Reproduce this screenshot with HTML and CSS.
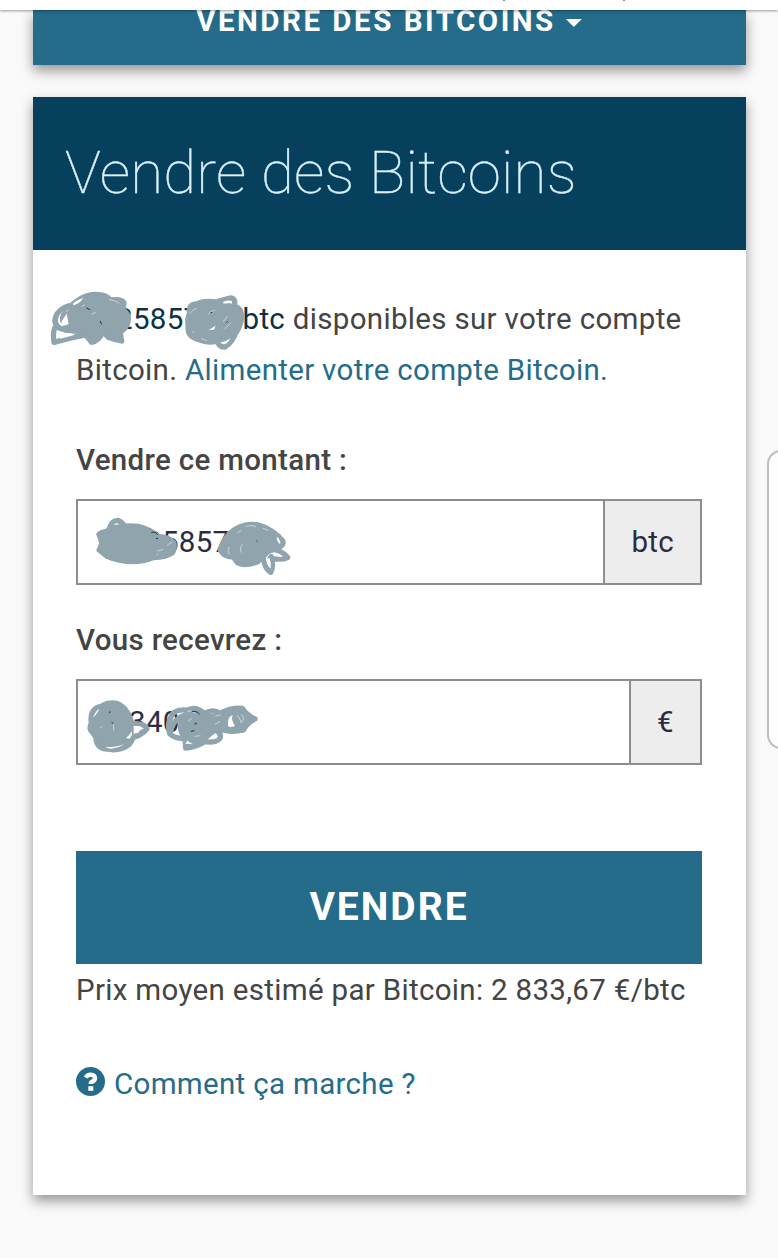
FILE: index.html
```
<!DOCTYPE html>
<html lang="fr">
<head>
    <meta charset="UTF-8">
    <meta name="viewport" content="width=device-width, initial-scale=1.0">
    <title>Vendre des Bitcoins</title>
    <link rel="stylesheet" href="styles.css">
</head>
<body>
    <header class="topbar">
        <span class="speck"></span>
        <span class="speck"></span>
    </header>

    <main class="container">
        <div class="menu-button"><span class="menu-label">VENDRE DES BITCOINS</span><span class="caret"></span></div>

        <section class="card">
            <h1>Vendre des Bitcoins</h1>
            <form class="card-body">
                <p class="balance">
                    <span class="amount"><span class="gap-start"></span>25857<span class="gap-mid"></span>btc</span> disponibles sur votre compte<br>
                    Bitcoin. <a class="fund">Alimenter votre compte Bitcoin.</a>
                    <svg class="scribble scribble-balance" viewBox="0 0 780 360">
                        <path class="blob" d="M75 95 Q100 55 150 45 Q195 40 215 62 Q246 62 248 85 Q266 95 264 120 Q262 145 243 158 L238 178 Q225 172 205 172 L190 160 L155 185 L135 162 L85 150 Q50 120 75 95Z"/>
                        <path d="M60 145 Q35 130 52 100 Q72 76 100 76 Q120 50 155 44 Q195 40 212 60 Q245 55 252 68 Q252 80 245 88 Q268 98 265 120 Q262 145 240 155 L245 183 Q225 178 205 172 L190 155 Q175 185 155 187 L138 165 Q100 170 42 187 Q36 150 50 135"/>
                        <path d="M85 145 Q105 90 150 70 M60 145 Q95 160 135 148"/>
                        <path class="hole" d="M61 136 Q66 118 80 101 L86 132 Q72 140 61 136Z"/>
                        <path class="hole" d="M98 72 Q110 60 129 54 Q122 70 101 76Z"/>
                        <path class="hole" d="M60 165 Q80 155 105 164 Q85 170 60 176Z"/>
                        <path class="light" d="M208 58 Q226 62 237 69 M126 79 L134 75 M156 102 L166 98 M78 95 L85 90"/>
                        <path class="dark" d="M181 124 L184 132 M140 84 L150 89"/>

                        <path class="blob" d="M452 90 Q480 66 540 72 Q580 70 597 90 Q612 125 590 155 Q570 180 520 185 Q475 185 450 162 Q430 120 452 90Z"/>
                        <path d="M480 72 Q450 68 448 90 Q452 115 445 140 Q440 170 480 180 Q510 192 550 180 Q590 175 603 125 Q610 85 582 78 Q590 55 570 54 Q545 60 530 66 Q490 60 470 72 M530 178 Q535 202 555 201 Q580 185 588 155"/>
                        <path class="hole" d="M551 65 Q565 59 575 64 Q568 73 549 70Z"/>
                        <path class="hole" d="M540 187 Q560 185 570 174 Q568 186 555 193Z"/>
                        <path class="hole" d="M506 150 L527 137 L522 149Z"/>
                        <path class="light" d="M505 102 Q512 92 523 91 M450 100 Q458 88 470 85 M555 145 L572 130 M550 125 L562 109 M485 176 L500 182 M459 155 L463 159"/>
                        <path class="dark" d="M513 98 L516 97 M560 127 L562 125"/>
                    </svg>
                </p>

                <label for="amount">Vendre ce montant :</label>
                <div class="field">
                    <div class="input input-btc" id="amount">25857</div>
                    <div class="unit">btc</div>
                    <svg class="scribble scribble-btc" viewBox="0 0 780 330">
                        <path class="blob" d="M84 181 L93 160 L86 137 Q100 128 122 112 Q165 101 205 106 Q240 114 265 136 Q298 138 313 155 Q320 170 310 190 Q290 204 250 206 Q220 218 190 218 Q145 218 110 202 Q95 190 84 181Z"/>
                        <path d="M117 122 Q122 92 143 91 Q160 98 168 115 M87 133 Q95 125 110 124"/>
                        <path class="light" d="M292 166 Q298 158 306 157 M263 183 L279 178 M261 194 L264 192"/>
                        <path class="dark" d="M245 127 Q257 124 262 133 M259 145 L263 146"/>

                        <path class="blob" d="M448 180 Q457 148 477 128 Q505 100 550 100 Q585 104 612 127 L633 172 Q610 182 595 188 Q580 203 565 218 Q520 234 500 220 L488 204 Q457 204 448 180Z"/>
                        <path d="M560 104 Q610 118 638 153 Q644 170 620 168 M602 178 Q635 180 653 202 Q635 212 600 204 M580 205 Q585 238 602 247 Q612 230 604 200"/>
                        <path class="hole" d="M609 187 Q626 188 638 200 Q624 201 616 197Z"/>
                        <path class="hole" d="M588 210 L598 203 Q605 220 602 236 Q592 225 588 210Z"/>
                        <path class="light" d="M477 172 Q470 183 478 193 M516 164 Q507 180 515 187 M528 109 Q543 104 557 109 M580 115 L594 121 M502 128 L514 122"/>
                        <path class="hole" d="M620 140 Q634 151 630 162 Q620 155 620 140Z"/>
                        <path class="dark" d="M560 153 L562 155"/>
                    </svg>
                </div>

                <label for="total">Vous recevrez :</label>
                <div class="field">
                    <div class="input input-eur" id="total">340<span class="gap-cents"></span>2</div>
                    <div class="unit">€</div>
                    <svg class="scribble scribble-eur" viewBox="0 0 780 330">
                        <path class="blob" d="M65 150 Q75 112 130 102 Q170 107 185 150 Q198 180 188 200 Q175 230 130 236 Q82 233 77 205 Q54 180 65 150Z"/>
                        <path d="M68 188 Q55 175 64 160 Q58 115 95 108 Q115 96 140 100 Q170 110 182 150 M78 195 Q75 235 110 237 Q150 245 178 223 Q200 195 187 160 Q225 160 231 176 Q215 200 165 207"/>
                        <path class="hole" d="M70 143 Q74 124 89 116 Q80 132 70 143Z"/>
                        <path class="hole" d="M191 168 Q212 166 221 175 Q208 187 191 192Z"/>
                        <path class="hole" d="M168 204 Q178 196 186 184 Q187 200 178 206Z"/>
                        <path class="hole" d="M105 232 Q140 232 163 223 Q145 235 120 236Z"/>
                        <path class="light" d="M91 174 L96 170 M130 165 L131 180"/>
                        <path class="dark" d="M118 127 L121 126 M126 158 L129 159"/>

                        <path class="blob" d="M337 145 Q350 127 375 127 Q405 132 420 137 L455 132 Q490 114 518 117 Q538 135 552 147 Q535 160 518 178 Q480 186 445 176 Q415 198 395 218 L355 223 Q337 200 337 145Z"/>
                        <path d="M375 130 Q340 110 310 128 Q288 160 300 192 Q318 208 345 205 M350 122 Q375 105 403 130 Q430 115 450 130 Q485 112 517 115 Q530 135 555 147 Q530 160 520 180 Q480 190 448 175 M335 150 Q325 185 345 200 L347 234 Q375 232 405 215 Q435 220 450 205 Q455 190 440 182"/>
                        <path d="M300 190 Q305 150 345 135"/>
                        <path class="hole" d="M474 155 Q475 140 488 135 Q482 150 495 167 Q482 174 474 168Z"/>
                        <path class="hole" d="M346 221 L352 212 L369 223Z"/>
                        <path class="light" d="M353 123 Q364 120 374 129 M430 207 L440 205 M515 134 Q528 145 513 158 M437 138 L451 135 M503 137 L515 157 M355 153 L365 145 M436 162 L449 155 M375 199 L390 197"/>
                        <path class="dark" d="M366 125 Q378 120 388 132 M375 162 L380 160 M364 184 L372 182"/>
                    </svg>
                </div>

                <button type="button" class="sell">VENDRE</button>
                <p class="price">Prix moyen estimé par Bitcoin: 2 833,67 €/btc</p>
                <a class="help">
                    <svg class="help-icon" viewBox="0 0 29 29">
                        <circle cx="14.5" cy="14.5" r="14.5"/>
                        <path d="M9.8 10.6 Q11.2 7.6 14.8 7.6 Q19 7.9 19 11.2 Q19 13.2 16.5 14.4 Q14.8 15.2 14.8 17"/>
                        <rect x="12.3" y="19.2" width="5" height="4.6"/>
                    </svg>
                    <span>Comment ça marche ?</span>
                </a>
            </form>
        </section>
    </main>

    <div class="edge-panel"></div>
</body>
</html>
```
FILE: styles.css
```
* {
    box-sizing: border-box;
}
body {
    margin: 0;
    height: 1258px;
    overflow: hidden;
    background-color: #fafafa;
    font-family: Roboto, "Liberation Sans", sans-serif;
    font-size: 29.5px;
    line-height: 51px;
    letter-spacing: 0.32px;
    color: #444;
}
.topbar {
    position: relative;
    z-index: 2;
    display: flex;
    gap: 118px;
    height: 10px;
    padding-left: 503px;
    background-color: white;
    box-shadow: 0 1px 3px rgba(0, 0, 0, 0.4);
}
.speck {
    width: 2px;
    height: 1px;
    background-color: #888;
}
.container {
    width: 713px;
    margin-left: 32.5px;
}
.menu-button {
    display: flex;
    justify-content: center;
    gap: 10px;
    height: 54.5px;
    margin-bottom: 32.5px;
    background-color: #256c8a;
    box-shadow: 0 6px 12px rgba(0, 0, 0, 0.4);
    color: white;
    font-weight: 700;
    letter-spacing: 2.5px;
    line-height: 23px;
}
.caret {
    margin-top: 9px;
    width: 16px;
    height: 8px;
    background-color: white;
    clip-path: polygon(0 0, 100% 0, 50% 100%);
}
.card {
    height: 1098px;
    background-color: white;
    box-shadow: 0 6px 12px rgba(0, 0, 0, 0.4);
}
h1 {
    height: 152.5px;
    margin: 0;
    padding-left: 32.5px;
    background-color: #06405c;
    color: #d9f1fc;
    font-size: 60px;
    font-weight: 100;
    line-height: 152px;
    letter-spacing: 0.2px;
    -webkit-text-stroke: 0.4px #d9f1fc;
}
.card-body {
    display: flex;
    flex-direction: column;
    padding: 44px 43.5px 0;
}
.balance {
    position: relative;
    margin: 0 0 39px;
    white-space: nowrap;
}
.amount {
    color: #0d3144;
}
.gap-start {
    display: inline-block;
    width: 40px;
}
.gap-mid {
    display: inline-block;
    width: 42px;
}
a {
    color: #256c8a;
}
label {
    font-weight: 500;
}
.field {
    position: relative;
    display: flex;
    height: 86px;
    margin: 13px 0 30px;
    border: 2px solid #8d8d8d;
    color: #2c2c3e;
    line-height: 82px;
}
.input {
    flex: 1;
}
.input-btc {
    padding-left: 67px;
}
.input-eur {
    padding-left: 51px;
}
.gap-cents {
    display: inline-block;
    width: 8px;
}
.unit {
    padding: 0 26px;
    border-left: 2px solid #8d8d8d;
    background-color: #ededed;
}
/* hand-drawn strokes hiding the digits */
.scribble {
    position: absolute;
    width: 260px;
    fill: none;
    stroke: #90a4ae;
    stroke-width: 16;
    stroke-linecap: round;
    stroke-linejoin: round;
}
.scribble-balance {
    left: -36px;
    top: -14px;
    height: 120px;
}
.scribble-btc,
.scribble-eur {
    left: -8px;
    top: -11px;
    height: 110px;
}
.scribble .blob {
    fill: #90a4ae;
    stroke-width: 10;
}
.scribble .hole {
    fill: white;
    stroke: none;
}
.scribble .light {
    stroke: #e6ecee;
    stroke-width: 2;
}
.scribble .dark {
    stroke: #26323d;
    stroke-width: 3;
}
.sell {
    height: 113px;
    margin-top: 56px;
    padding: 0;
    border: 0;
    background-color: #256c8a;
    color: white;
    font-family: inherit;
    font-size: 39px;
    font-weight: 700;
    letter-spacing: 2px;
}
.price {
    margin: 1px 0 43px;
    white-space: nowrap;
}
.help {
    display: flex;
    align-items: center;
    gap: 9px;
}
.help-icon {
    width: 29px;
    height: 29px;
    margin-top: -6px;
    fill: #256c8a;
}
.help-icon path {
    fill: none;
    stroke: white;
    stroke-width: 4.4;
}
.help-icon rect {
    fill: white;
}
.edge-panel {
    position: fixed;
    top: 450px;
    left: 767px;
    width: 30px;
    height: 299px;
    border: 2px solid #bebebe;
    border-radius: 14px;
    background-color: #fdfdfd;
}
```
